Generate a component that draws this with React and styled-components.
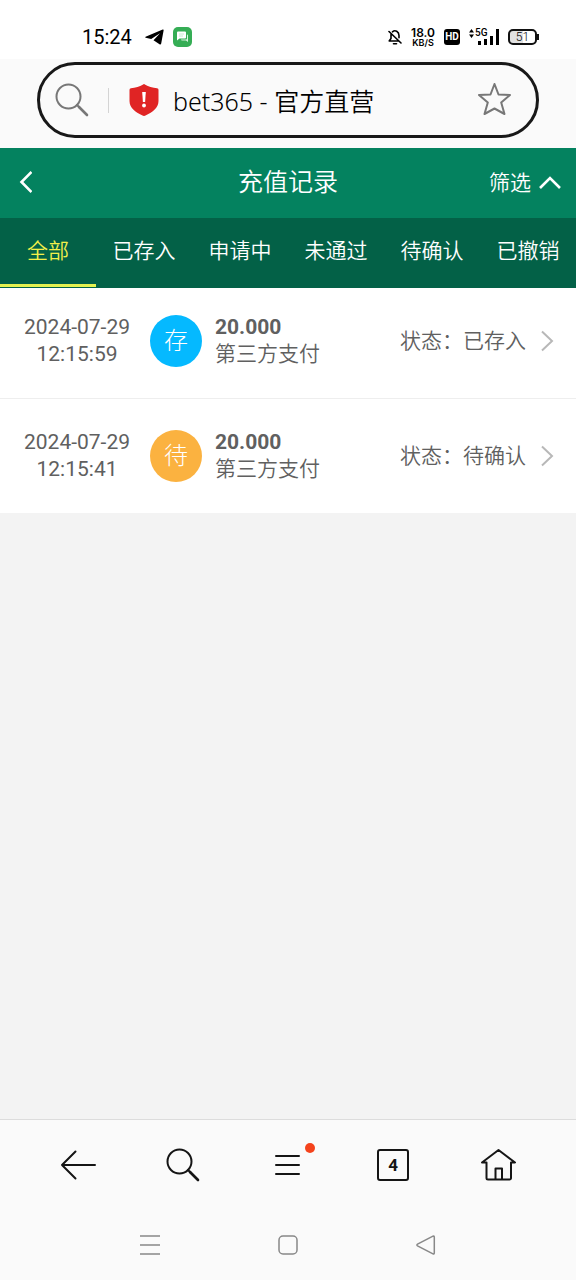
import React, { useState } from "react";
import styled, { createGlobalStyle } from "styled-components";

const GlobalStyle = createGlobalStyle`
    *{
        box-sizing:border-box;
    }
    body{
        margin:0;
        background:#f3f3f3;
        font-family:Roboto, "Noto Sans CJK SC", sans-serif;
    }
    button, input{
        font-family:inherit;
        padding:0;
        border:0;
        background:none;
    }
    button{
        cursor:pointer;
    }
    svg{
        display:block;
        flex:none;
    }
`;

const Page = styled.div`
    display:flex;
    flex-direction:column;
    min-height:100vh;
`;

const StatusBar = styled.div`
    display:flex;
    align-items:center;
    justify-content:space-between;
    height:59px;
    padding:15px 37px 0 82px;
    background:#fff;
    color:#000;
`;

const StatusGroup = styled.div`
    display:flex;
    align-items:center;
    gap:${({ $gap }) => $gap}px;
`;

const Clock = styled.time`
    font-size:20px;
    line-height:24px;
    margin-right:4px;
`;

const Speed = styled.div`
    display:flex;
    flex-direction:column;
    align-items:center;
    font-family:Inter, sans-serif;
    font-weight:600;
    font-size:12px;
    line-height:11px;
    small{
        font-size:9px;
        line-height:9px;
    }
`;

const HdBadge = styled.span`
    width:16px;
    height:16px;
    border-radius:3px;
    background:#000;
    color:#fff;
    font-size:10px;
    font-weight:700;
    line-height:16px;
    text-align:center;
`;

const Signal = styled.div`
    position:relative;
    span{
        position:absolute;
        top:0;
        left:6px;
        font-size:10px;
        font-weight:500;
        line-height:8px;
    }
`;

const Battery = styled.div`
    position:relative;
    width:29px;
    height:16px;
    margin-right:2px;
    border:2px solid #111;
    border-radius:5px;
    background:linear-gradient(to right, #e2e2e2 51%, #fff 51%);
    font-size:12px;
    font-weight:300;
    line-height:13px;
    text-align:center;
    &::after{
        content:"";
        position:absolute;
        top:3px;
        right:-4px;
        width:2px;
        height:6px;
        background:#111;
    }
`;

const AddressArea = styled.div`
    padding:3px 37px 10px;
    background:#fafafa;
`;

const AddressBar = styled.div`
    display:flex;
    align-items:center;
    height:76px;
    padding:0 24px 0 15px;
    border:3px solid #181818;
    border-radius:38px;
`;

const Divider = styled.span`
    width:1px;
    height:25px;
    margin:0 20px 0 19px;
    background:#d4d4d4;
`;

const AddressInput = styled.input`
    flex:1;
    min-width:0;
    margin-left:14px;
    height:36px;
    color:#000;
    font-family:"Noto Sans", "Noto Sans CJK SC", sans-serif;
    font-size:25px;
    font-weight:350;
    outline:none;
`;

const Header = styled.header`
    display:grid;
    grid-template-columns:1fr auto 1fr;
    align-items:center;
    height:70px;
    padding:0 15px;
    background:#04825f;
    color:#fff;
`;

const Title = styled.h1`
    margin:0;
    font-size:25px;
    font-weight:350;
    line-height:36px;
`;

const BackButton = styled.button`
    justify-self:start;
    padding:0 4px 3px;
`;

const FilterButton = styled.button`
    justify-self:end;
    display:flex;
    align-items:center;
    gap:8px;
    color:#fff;
    font-size:21px;
    font-weight:350;
    line-height:30px;
`;

const Tabs = styled.nav`
    display:grid;
    grid-template-columns:repeat(6, 1fr);
    height:70px;
    padding-bottom:1px;
    background:#036147;
`;

const Tab = styled.button`
    border-bottom:3px solid ${({ $active }) => ($active ? "#e4f150" : "transparent")};
    color:${({ $active }) => ($active ? "#f2f04a" : "#fff")};
    font-size:21px;
    font-weight:350;
    line-height:30px;
    white-space:nowrap;
`;

const Main = styled.main`
    flex:1;
`;

const RecordList = styled.ul`
    margin:0;
    padding:0;
    list-style:none;
    background:#fff;
    li + li{
        border-top:1px solid #eee;
    }
    li:first-child a{
        padding-top:26px;
    }
`;

const RecordRow = styled.a`
    display:flex;
    align-items:center;
    padding:30px 22px;
    color:#606060;
    font-size:21px;
    line-height:27px;
    text-decoration:none;
`;

const DateText = styled.time`
    width:110px;
    text-align:center;
`;

const Avatar = styled.span`
    width:52px;
    height:52px;
    margin:0 13px 0 18px;
    border-radius:50%;
    background:${({ $color }) => $color};
    color:#fff;
    font-size:24px;
    font-weight:300;
    line-height:52px;
    text-align:center;
`;

const Payment = styled.div`
    flex:1;
    font-weight:350;
    strong{
        display:block;
        font-weight:700;
    }
`;

const State = styled.span`
    margin-right:15px;
    font-weight:350;
`;

const BottomBar = styled.footer`
    border-top:1px solid #dcdcdc;
    background:#fafafa;
`;

const Toolbar = styled.nav`
    display:grid;
    grid-template-columns:repeat(5, 1fr);
    height:90px;
    padding:0 25px;
`;

const SystemNav = styled.nav`
    display:grid;
    grid-template-columns:repeat(3, 1fr);
    height:70px;
    padding:0 81px;
`;

const IconButton = styled.button`
    display:flex;
    align-items:center;
    justify-content:center;
`;

const TabCount = styled.span`
    width:32px;
    height:32px;
    border:2px solid #151515;
    border-radius:3px;
    color:#151515;
    font-size:17px;
    font-weight:700;
    line-height:28px;
`;

const MenuIcon = styled.span`
    position:relative;
`;

const Dot = styled.i`
    position:absolute;
    top:-10px;
    right:-14px;
    width:10px;
    height:10px;
    border-radius:50%;
    background:#f4431c;
`;

const SearchIcon = ({ color }) => (
    <svg width="34" height="34" viewBox="0 0 34 34" fill="none" stroke={color} strokeLinecap="round">
        <circle cx="13.5" cy="13.5" r="12" strokeWidth="2" />
        <path d="M22 22l3 3" strokeWidth="2" />
        <path d="M24 24l8 8" strokeWidth="2.6" />
    </svg>
);

const tabs = ["全部", "已存入", "申请中", "未通过", "待确认", "已撤销"];

const records = [
    { date: "2024-07-29", time: "12:15:59", mark: "存", color: "#05b9ff", amount: "20.000", method: "第三方支付", state: "已存入" },
    { date: "2024-07-29", time: "12:15:41", mark: "待", color: "#fbb240", amount: "20.000", method: "第三方支付", state: "待确认" },
];

const PhoneStatus = () => (
    <StatusBar>
        <StatusGroup $gap={9}>
            <Clock>15:24</Clock>
            <svg width="19" height="16" viewBox="0 0 19 16">
                <path d="M.6 7.800L17.700.600c.7-.3 1.100.1.9.8L16.200 14.500c-.2 1-.9 1.200-1.700.7L8.500 11.200l6.500-7L6.200 10 .7 8.700c-.6-.2-.6-.6-.1-.9z" fill="#000" />
            </svg>
            <svg width="19" height="20" viewBox="0 0 19 20">
                <rect width="19" height="20" rx="5" fill="#35ad55" />
                <path d="M5 4.500h7a1 1 0 0 1 1 1v5a1 1 0 0 1-1 1H6.500L4 13.500v-8a1 1 0 0 1 1-1z" fill="#fff" />
                <path d="M14 7.500a1 1 0 0 1 1 1V15l-2-1.500H9a1 1 0 0 1-1-1h5a1 1 0 0 0 1-1z" fill="#d9f3df" />
                <path d="M6 7h5M6 9h4" stroke="#c5ead0" strokeWidth="1" />
            </svg>
        </StatusGroup>
        <StatusGroup $gap={9}>
            <svg width="14" height="16" viewBox="0 0 14 16" fill="none" stroke="#000" strokeWidth="1.6" strokeLinecap="round" strokeLinejoin="round">
                <path d="M4.500 2.800C7 .5 11 2.500 11 6.500v2.300M10.500 12H1.200L3 9.500V5.500M1 2.500l12 11.500" />
                <path d="M5.500 14.800h3" />
            </svg>
            <Speed>
                <span>18.0</span>
                <small>KB/S</small>
            </Speed>
            <HdBadge>HD</HdBadge>
            <Signal>
                <svg width="30" height="16" viewBox="0 0 30 16">
                    <path d="M0 3.500L2.500 0 5 3.500zM0 5.500h5L2.500 9zM9 12h3v4H9zM15 10h3v6h-3zM21 7h3v9h-3zM27 0h3v16h-3z" fill="#000" />
                </svg>
                <span>5G</span>
            </Signal>
            <Battery>51</Battery>
        </StatusGroup>
    </StatusBar>
);

const BrowserAddress = () => (
    <AddressArea>
        <AddressBar>
            <SearchIcon color="#777" />
            <Divider />
            <svg width="30" height="34" viewBox="0 0 30 34">
                <path d="M15 1c4 3 9 3.500 13 4.200 1 .2 1.500.8 1.500 1.800v11c0 7-6 11-12.500 14.300-1.500.8-2.500.8-4 0C6.500 29 .5 25 .5 18V7c0-1 .5-1.600 1.500-1.800C6 4.500 11 4 15 1z" fill="#e02424" />
                <path d="M13.200 9h3.600l-.7 10h-2.200z" fill="#fff" />
                <circle cx="15" cy="22.500" r="1.900" fill="#fff" />
            </svg>
            <AddressInput aria-label="网址" defaultValue="bet365 - 官方直营" />
            <IconButton aria-label="收藏">
                <svg width="34" height="34" viewBox="0 0 34 34" fill="none" stroke="#777" strokeWidth="2" strokeLinejoin="round">
                    <path d="M16.500 1l4 10.500L32 12l-8.800 7.500L26.500 31l-10-5.500-10 5.500 3.300-11.500L1 12l11.500-.5z" />
                </svg>
            </IconButton>
        </AddressBar>
    </AddressArea>
);

const Record = ({ record }) => (
    <li>
        <RecordRow href="#">
            <DateText>{record.date} {record.time}</DateText>
            <Avatar $color={record.color}>{record.mark}</Avatar>
            <Payment>
                <strong>{record.amount}</strong>
                {record.method}
            </Payment>
            <State>状态：{record.state}</State>
            <svg width="13" height="22" viewBox="0 0 13 22" fill="none" stroke="#b8b8b8" strokeWidth="2">
                <path d="M1 1.500l10 9.500L1 20.500" />
            </svg>
        </RecordRow>
    </li>
);

const BrowserBottom = () => (
    <BottomBar>
        <Toolbar>
            <IconButton aria-label="后退">
                <svg width="36" height="30" viewBox="0 0 36 30" fill="none" stroke="#151515" strokeWidth="2" strokeLinecap="round" strokeLinejoin="round">
                    <path d="M35 15H2M15.500 1.500L2 15l13.500 13.500" />
                </svg>
            </IconButton>
            <IconButton aria-label="搜索"><SearchIcon color="#151515" /></IconButton>
            <IconButton aria-label="菜单">
                <MenuIcon>
                    <svg width="26" height="24" viewBox="0 0 26 24" stroke="#151515" strokeWidth="2" strokeLinecap="round">
                        <path d="M1 3h23M1 12h23M1 21h23" />
                    </svg>
                    <Dot />
                </MenuIcon>
            </IconButton>
            <IconButton aria-label="标签页"><TabCount>4</TabCount></IconButton>
            <IconButton aria-label="主页">
                <svg width="36" height="34" viewBox="0 0 36 34" fill="none" stroke="#151515" strokeWidth="2" strokeLinecap="round" strokeLinejoin="round">
                    <path d="M6.500 14.500H2L18.500 2 35 14.500h-4V30a1.500 1.500 0 0 1-1.500 1.500H8A1.500 1.500 0 0 1 6.500 30zM15.500 31V20.500H22V31" />
                </svg>
            </IconButton>
        </Toolbar>
        <SystemNav>
            <IconButton aria-label="最近任务">
                <svg width="20" height="20" viewBox="0 0 20 20" stroke="#888" strokeWidth="1.500">
                    <path d="M0 1h20M0 10h20M0 19h20" />
                </svg>
            </IconButton>
            <IconButton aria-label="主屏幕">
                <svg width="20" height="20" viewBox="0 0 20 20" fill="none" stroke="#888" strokeWidth="1.500">
                    <rect x="1" y="1" width="18" height="18" rx="4" />
                </svg>
            </IconButton>
            <IconButton aria-label="返回">
                <svg width="20" height="20" viewBox="0 0 20 20" fill="none" stroke="#888" strokeWidth="1.500" strokeLinejoin="round">
                    <path d="M17 1.200L1.500 9.200q-1.200.8 0 1.600L17 18.800q1.300.5 1.300-1V2.200q0-1.500-1.300-1z" />
                </svg>
            </IconButton>
        </SystemNav>
    </BottomBar>
);

const App = () => {
    const [active, setActive] = useState(0);

    return (
        <Page>
            <GlobalStyle />
            <PhoneStatus />
            <BrowserAddress />
            <Header>
                <BackButton aria-label="返回上一页">
                    <svg width="13" height="22" viewBox="0 0 13 22" fill="none" stroke="#fff" strokeWidth="2.600">
                        <path d="M12.500 1L2.500 11l10 10" />
                    </svg>
                </BackButton>
                <Title>充值记录</Title>
                <FilterButton>
                    筛选
                    <svg width="22" height="14" viewBox="0 0 22 14" fill="none" stroke="#fff" strokeWidth="2.600">
                        <path d="M1 12L11 2 21 12" />
                    </svg>
                </FilterButton>
            </Header>
            <Tabs>
                {tabs.map((tab, index) => (
                    <Tab key={tab} $active={index === active} onClick={() => setActive(index)}>{tab}</Tab>
                ))}
            </Tabs>
            <Main>
                <RecordList>
                    {records.map((record) => <Record key={record.time} record={record} />)}
                </RecordList>
            </Main>
            <BrowserBottom />
        </Page>
    );
};

export default App;
